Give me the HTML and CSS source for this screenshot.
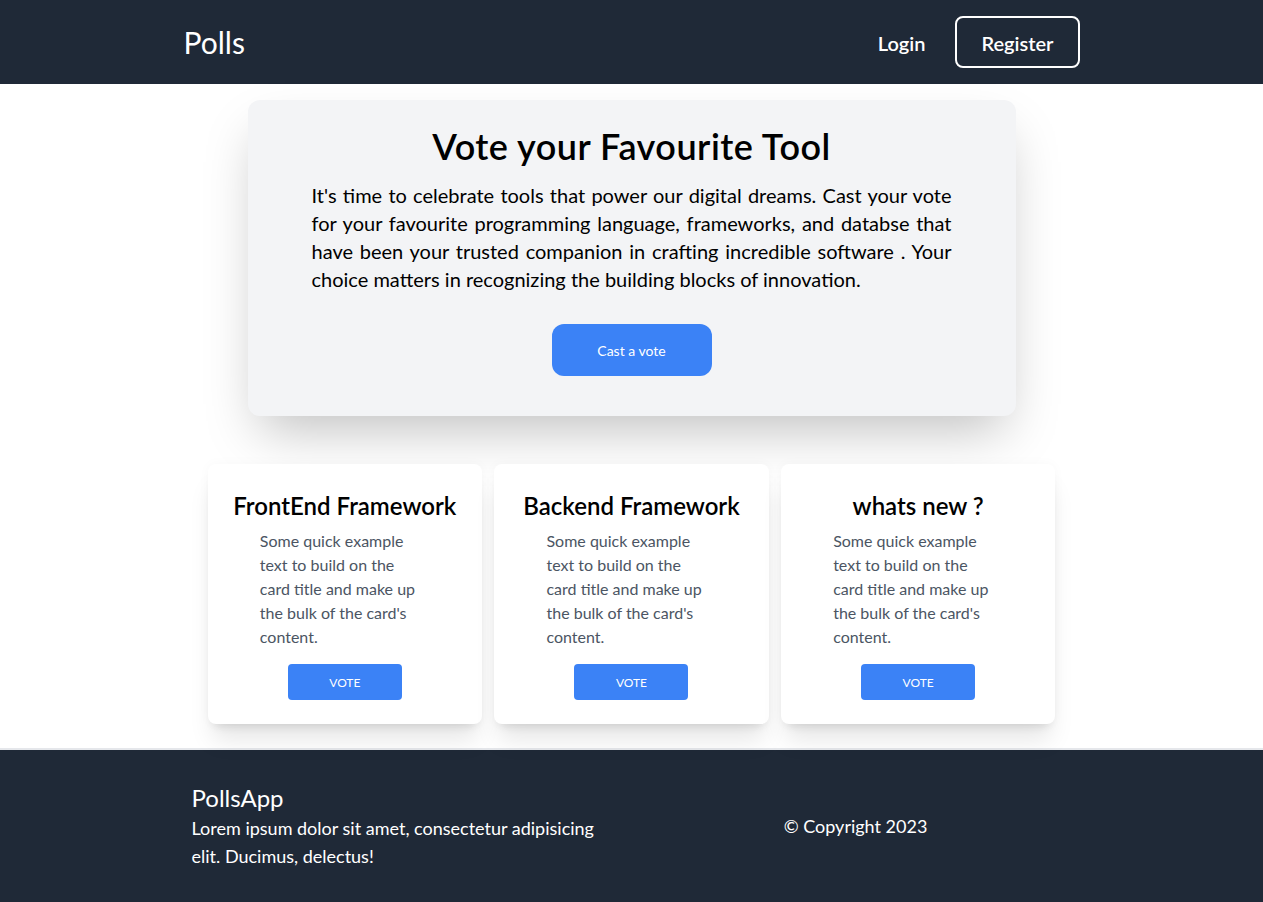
FILE: index.html
```html
<!DOCTYPE html>
<html lang="en">
<head>
<meta charset="utf-8">
<title>Polls</title>
<link rel="stylesheet" href="styles.css">
</head>
<body>
<header class="nav">
  <div class="nav-inner">
    <a class="brand" href="#">Polls</a>
    <div class="nav-links">
      <a class="nav-login" href="#">Login</a>
      <a class="nav-register" href="#">Register</a>
    </div>
  </div>
</header>
<main class="main">
  <section class="hero">
    <h1 class="hero-title">Vote your Favourite Tool</h1>
    <p class="hero-text">It's time to celebrate tools that power our digital dreams. Cast your vote for your favourite programming language, frameworks, and databse that have been your trusted companion in crafting incredible software . Your choice matters in recognizing the building blocks of innovation.</p>
    <a class="hero-btn" href="#">Cast a vote</a>
  </section>
  <section class="cards">
    <div class="card">
      <h2 class="card-title">FrontEnd Framework</h2>
      <p class="card-text">Some quick example text to build on the card title and make up the bulk of the card's content.</p>
      <a class="card-btn" href="#">Vote</a>
    </div>
    <div class="card">
      <h2 class="card-title">Backend Framework</h2>
      <p class="card-text">Some quick example text to build on the card title and make up the bulk of the card's content.</p>
      <a class="card-btn" href="#">Vote</a>
    </div>
    <div class="card">
      <h2 class="card-title">whats new ?</h2>
      <p class="card-text">Some quick example text to build on the card title and make up the bulk of the card's content.</p>
      <a class="card-btn" href="#">Vote</a>
    </div>
  </section>
</main>
<footer class="footer">
  <div class="footer-inner">
    <div class="footer-about">
      <div class="footer-brand">PollsApp</div>
      <p class="footer-text">Lorem ipsum dolor sit amet, consectetur adipisicing elit. Ducimus, delectus!</p>
    </div>
    <div class="footer-copy">© Copyright 2023</div>
  </div>
</footer>
</body>
</html>
```

FILE: styles.css
```css
* { box-sizing: border-box; }
html, body { margin: 0; padding: 0; }
body {
  font-family: "Lato", "Noto Sans", sans-serif;
  color: #000;
  background: #fff;
}
a { text-decoration: none; color: inherit; }
h1, h2, p { margin: 0; }

.nav { background: #1f2937; }
.nav-inner {
  max-width: 896px;
  margin: 0 auto;
  padding: 16px 0;
  display: flex;
  align-items: center;
  justify-content: space-between;
}
.brand {
  color: #fff;
  font-size: 30px;
  line-height: 36px;
}
.nav-links { display: flex; align-items: center; gap: 30px; }
.nav-login, .nav-register {
  color: #fff;
  font-size: 20px;
  line-height: 28px;
  font-weight: 600;
}
.nav-login { padding-top: 2px; }
.nav-register {
  border: 2px solid #fff;
  border-radius: 8px;
  padding: 11px 24px 9px;
}

.main { padding-top: 16px; padding-bottom: 24px; }
.hero {
  max-width: 768px;
  margin: 0 auto;
  background: #f3f4f6;
  border-radius: 12px;
  box-shadow: 0 25px 50px -12px rgba(0,0,0,0.25);
  padding: 22px 64px 40px;
  display: flex;
  flex-direction: column;
  align-items: center;
}
.hero-title {
  font-size: 36px;
  line-height: 48px;
  font-weight: 600;
  letter-spacing: 0.5px;
  text-align: center;
}
.hero-text {
  margin-top: 11px;
  font-size: 20px;
  line-height: 28px;
  text-align: justify;
  align-self: stretch;
}
.hero-btn {
  margin-top: 31px;
  width: 160px;
  height: 52px;
  display: flex;
  align-items: center;
  justify-content: center;
  background: #3b82f6;
  color: #fff;
  font-size: 14px;
  border-radius: 12px;
}

.cards {
  max-width: 896px;
  margin: 48px auto 0;
  padding: 0 24px;
  display: grid;
  grid-template-columns: repeat(3, 1fr);
  gap: 12px;
}
.card {
  background: #fff;
  border-radius: 8px;
  box-shadow: 0 20px 25px -5px rgba(0,0,0,0.1), 0 8px 10px -6px rgba(0,0,0,0.1), 0 0 12px rgba(0,0,0,0.03);
  padding: 24px 0;
  display: flex;
  flex-direction: column;
  align-items: center;
}
.card-title {
  font-size: 24px;
  line-height: 36px;
  font-weight: 600;
  text-align: center;
}
.card-text {
  width: 170px;
  padding-right: 10px;
  margin-top: 5px;
  color: #4b5563;
  font-size: 16px;
  line-height: 24px;
}
.card-btn {
  margin-top: 15px;
  width: 114px;
  height: 36px;
  display: flex;
  align-items: center;
  justify-content: center;
  background: #3b82f6;
  color: #fff;
  font-size: 12px;
  text-transform: uppercase;
  border-radius: 4px;
}

.footer {
  background: #1f2937;
  border-top: 2px solid #e5e7eb;
  color: #fff;
}
.footer-inner {
  max-width: 880px;
  margin: 0 auto;
  padding: 32px 0;
  display: grid;
  grid-template-columns: 1fr 1fr;
  align-items: center;
}
.footer-brand { font-size: 24px; line-height: 32px; }
.footer-text { font-size: 18px; line-height: 28px; max-width: 420px; }
.footer-copy { font-size: 18px; line-height: 28px; text-align: center; padding-left: 8px; }
```
